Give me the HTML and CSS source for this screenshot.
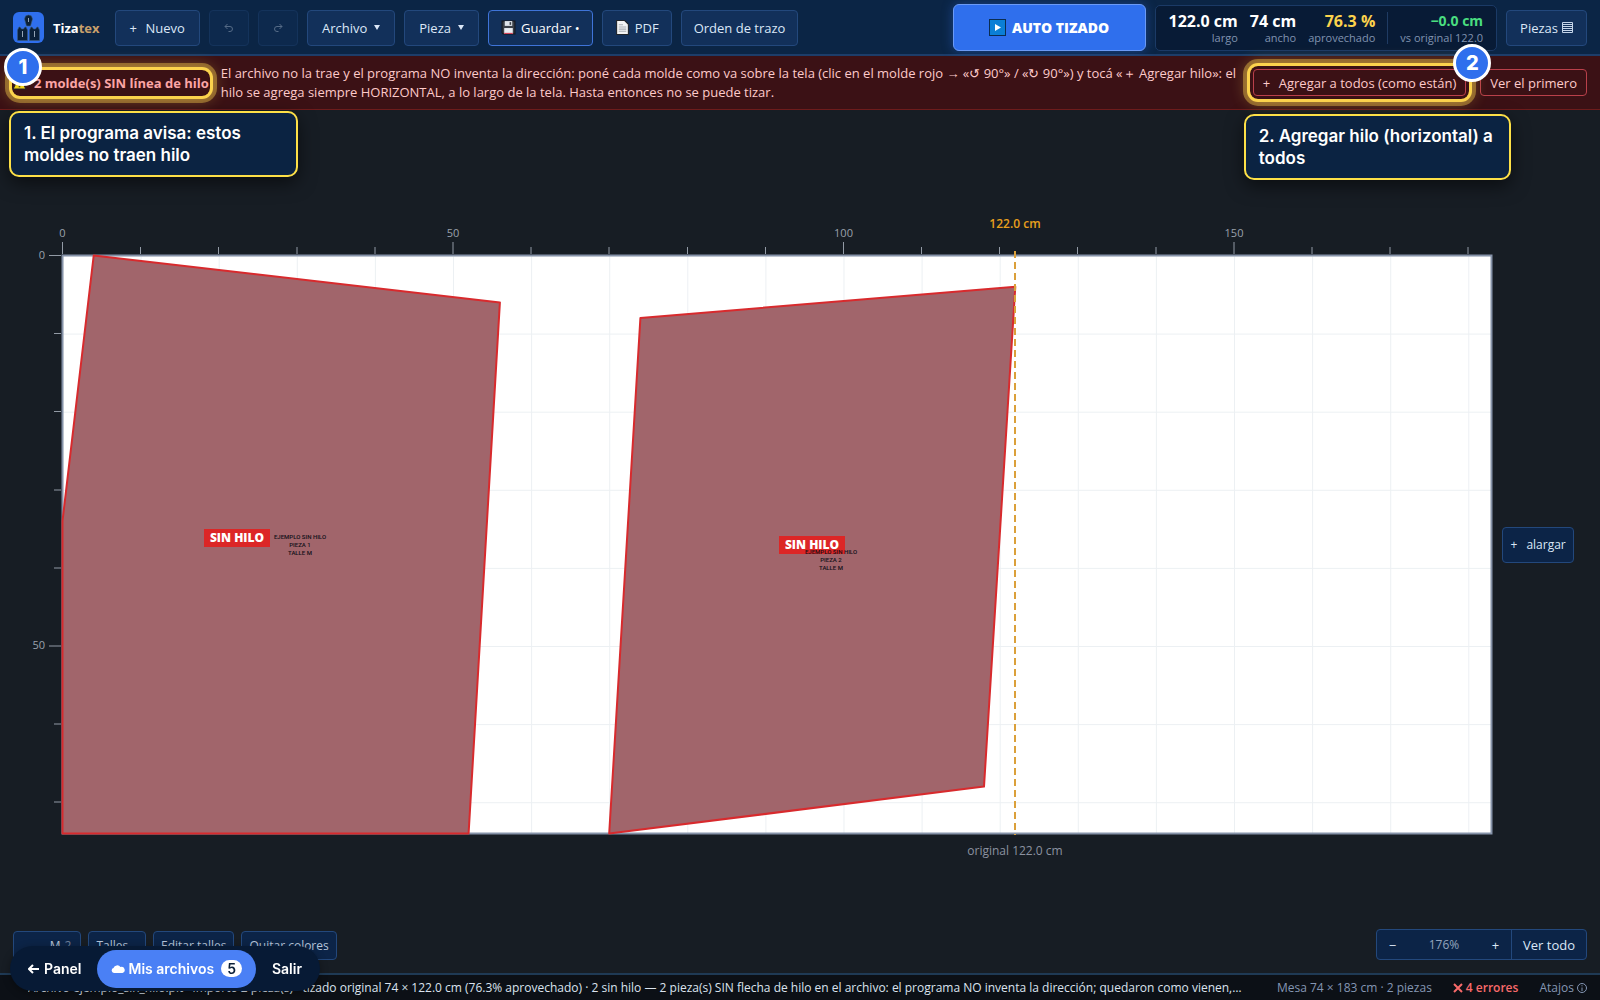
FILE: index.html
```html
<!DOCTYPE html>
<html lang="es">
<head>
<meta charset="utf-8">
<meta name="viewport" content="width=device-width, initial-scale=1">
<title>Tizatex</title>
<link rel="stylesheet" href="styles.css">
</head>
<body>
<header class="topbar">
  <a class="brand" href="#">
    <svg class="logo" viewBox="0 0 31 31" aria-hidden="true">
      <rect width="31" height="31" rx="6" fill="#2f6fed"/>
      <g fill="#0b2038" stroke="#3c5d7c" stroke-width="0.6">
        <path d="M12.500 4q3-2 6 0l1 3-2 7h-4l-2-7z"/>
        <path d="M4.500 18l1.500-3h1l1.500 2h2l1.500-2h1l1.500 3v10.500h-10z"/>
        <path d="M16.500 18l1.500-3h1l1.500 2h2l1.500-2h1l1.500 3v10.500h-10z"/>
      </g>
      <path d="M15.500 6v4M9.500 19v6M21.500 19v6" stroke="#b8c6d6" stroke-width="0.8"/>
    </svg>
    <span class="brand-name">Tiza<span class="brand-accent">tex</span></span>
  </a>
  <nav class="tools" aria-label="Herramientas">
    <button class="btn" type="button"><span class="plus">+</span>Nuevo</button>
    <button class="btn btn-icon" type="button" aria-label="Deshacer" disabled>
      <svg viewBox="0 0 12 12" class="ico"><path d="M4.500 2L2 4.500 4.500 7M2 4.500h5a2.500 2.500 0 0 1 0 5H5.500"/></svg>
    </button>
    <button class="btn btn-icon" type="button" aria-label="Rehacer" disabled>
      <svg viewBox="0 0 12 12" class="ico"><path d="M7.500 2L10 4.500 7.500 7M10 4.500H5a2.500 2.500 0 0 0 0 5h1.500"/></svg>
    </button>
    <button class="btn" type="button">Archivo<span class="caret"></span></button>
    <button class="btn" type="button">Pieza<span class="caret"></span></button>
    <button class="btn btn-tight btn-save" type="button">
      <svg viewBox="0 0 14 14" class="emoji"><path d="M1 1h12v12H2l-1-1z" fill="#3a3f47" stroke="#14171c"/><path d="M3.500 1h7v4.500h-7z" fill="#dfe4ea"/><path d="M8 2h1.500v2.500H8z" fill="#3a3f47"/><path d="M3 7.500h8V13H3z" fill="#e9edf2"/><path d="M3 12h8v1H3z" fill="#d2344c"/></svg>Guardar •
    </button>
    <button class="btn btn-tight" type="button">
      <svg viewBox="0 0 14 14" class="emoji"><path d="M1.500.5H9l3.500 3.500v9.500h-11z" fill="#f4f4f4" stroke="#20242a"/><path d="M3.500 4.500h4M3.500 6.500h7M3.500 8.500h7M3.500 10.500h7" stroke="#a9adb3"/></svg>PDF
    </button>
    <button class="btn btn-tight" type="button">Orden de trazo</button>
  </nav>
  <div class="actions">
    <button class="btn-auto" type="button">
      <svg viewBox="0 0 17 17" class="play"><rect x=".5" y=".5" width="16" height="16" fill="#0b7fd6" stroke="#0a2d52"/><path d="M6 5l6 3.500L6 12z" fill="#fff"/></svg>AUTO TIZADO
    </button>
    <dl class="stats">
      <div class="stat"><dd>122.0 cm</dd><dt>largo</dt></div>
      <div class="stat"><dd>74 cm</dd><dt>ancho</dt></div>
      <div class="stat stat-gold"><dd>76.3 %</dd><dt>aprovechado</dt></div>
      <div class="stat stat-diff"><dd>−0.0 cm</dd><dt>vs original 122.0</dt></div>
    </dl>
    <button class="btn btn-pieces" type="button">Piezas
      <svg viewBox="0 0 11 11" class="rows"><path d="M.5.500h10v10H.5zM1 2.500h9M1 4.500h9M1 6.500h9M1 8.500h9"/></svg>
    </button>
  </div>
</header>

<section class="alert" aria-label="Aviso">
  <div class="mark">
    <strong class="alert-title"><svg viewBox="0 0 14 14" class="emoji"><path d="M7 1l6 12H1z" fill="#f2d21b" stroke="#22252b"/><path d="M7 5v4M7 10.500v1" stroke="#222" stroke-width="1.500"/></svg>2 molde(s) SIN línea de hilo</strong>
    <span class="badge badge-one">1</span>
    <p class="callout callout-one">1. El programa avisa: estos moldes no traen hilo</p>
  </div>
  <p class="alert-text">El archivo no la trae y el programa NO inventa la dirección: poné cada molde como va sobre la tela (clic en el molde rojo → «↺ 90°» / «↻ 90°») y tocá «＋ Agregar hilo»: el hilo se agrega siempre HORIZONTAL, a lo largo de la tela. Hasta entonces no se puede tizar.</p>
  <div class="mark mark-two">
    <button class="btn-alert" type="button"><span class="plus">+</span>Agregar a todos (como están)</button>
    <span class="badge badge-two">2</span>
    <p class="callout callout-two">2. Agregar hilo (horizontal) a todos</p>
  </div>
  <button class="btn-alert" type="button">Ver el primero</button>
</section>

<main class="workspace">
  <svg class="table" viewBox="0 0 1600 863" role="img" aria-label="Mesa de tizado">
    <defs>
      <pattern id="grid" x="62.500" y="145.500" width="78.100" height="78.100" patternUnits="userSpaceOnUse">
        <path d="M0 0H78.100M0 0V78.100" fill="none" stroke="#ecf0f3" stroke-width="2"/>
      </pattern>
    </defs>
    <rect x="62.500" y="145.500" width="1429" height="578" fill="#fff"/>
    <rect x="62.500" y="145.500" width="1429" height="578" fill="url(#grid)"/>
    <rect x="62.500" y="145.500" width="1429" height="578" fill="none" stroke="#8592a8" stroke-width="2"/>
    <path class="tick" d="M62.500 132v12M453 132v12M843.500 132v12M1234 132v12M49 145.500h12M49 536h12"/>
    <path class="tick" d="M140.500 137v7M218.500 137v7M297 137v7M375 137v7M531 137v7M609 137v7M687.500 137v7M765.500 137v7M921.500 137v7M999.500 137v7M1077.500 137v7M1156 137v7M1312 137v7M1390 137v7M1468 137v7M54 223.500h7M54 301.500h7M54 380h7M54 458h7M54 614h7M54 692h7"/>
    <g class="scale">
      <text x="62.500" y="127" text-anchor="middle">0</text>
      <text x="453" y="127" text-anchor="middle">50</text>
      <text x="843.500" y="127" text-anchor="middle">100</text>
      <text x="1234" y="127" text-anchor="middle">150</text>
      <text x="45" y="149" text-anchor="end">0</text>
      <text x="45" y="539" text-anchor="end">50</text>
    </g>
    <path class="piece" d="M93.700 145.500L499.900 192.400 468.600 723.500H62.500V411z"/>
    <path class="piece" d="M640.400 208L1015.300 176.700 984 676.600 609.200 723.500z"/>
    <path d="M1015 141V725" stroke="#dba03a" stroke-width="2" stroke-dasharray="7 4"/>
    <text class="limit" x="1015" y="118" text-anchor="middle">122.0 cm</text>
    <text class="origin" x="1015" y="745" text-anchor="middle">original 122.0 cm</text>
    <rect x="204" y="419" width="66" height="18" fill="#dc2626"/>
    <text class="tag" x="237" y="432" text-anchor="middle">SIN HILO</text>
    <rect x="779" y="426" width="66" height="18" fill="#dc2626"/>
    <text class="tag" x="812" y="439" text-anchor="middle">SIN HILO</text>
    <g class="note" text-anchor="middle">
      <text x="300" y="429">EJEMPLO SIN HILO</text><text x="300" y="437">PIEZA 1</text><text x="300" y="445">TALLE M</text>
      <text x="831" y="444">EJEMPLO SIN HILO</text><text x="831" y="452">PIEZA 2</text><text x="831" y="460">TALLE M</text>
    </g>
  </svg>
  <button class="btn btn-grow" type="button"><span class="plus">+</span>alargar</button>
  <div class="sizes">
    <button class="btn btn-small btn-size" type="button">M <span class="dim">2</span></button>
    <button class="btn btn-small btn-sizes" type="button">Talles…</button>
    <button class="btn btn-small" type="button">Editar talles</button>
    <button class="btn btn-small" type="button">Quitar colores</button>
  </div>
  <div class="zoom">
    <button type="button" aria-label="Alejar">−</button>
    <output>176%</output>
    <button type="button" aria-label="Acercar">+</button>
    <button class="fit" type="button">Ver todo</button>
  </div>
</main>

<footer class="status">
  <p class="status-text">Archivo ejemplo_sin_hilo.plt · importó 2 pieza(s) · tizado original 74 × 122.0 cm (76.3% aprovechado) · 2 sin hilo — 2 pieza(s) SIN flecha de hilo en el archivo: el programa NO inventa la dirección; quedaron como vienen,…</p>
  <span>Mesa 74 × 183 cm · 2 piezas</span>
  <span class="errors"><svg viewBox="0 0 10 10" class="cross"><path d="M1 1l8 8M9 1L1 9"/></svg>4 errores</span>
  <a class="keys" href="#">Atajos <svg viewBox="0 0 10 10" class="info"><circle cx="5" cy="5" r="4.500"/><path d="M5 4.500V8M5 2.300v1"/></svg></a>
</footer>

<nav class="dock" aria-label="Cuenta">
  <a href="#"><svg viewBox="0 0 12 12" class="back"><path d="M11 6H1.500M5 2L1 6l4 4"/></svg>Panel</a>
  <a class="dock-main" href="#"><svg viewBox="0 0 14 8" class="cloud"><path d="M3 8a2.500 2.500 0 0 1-.5-4.900A4 4 0 0 1 9.500 2a3 3 0 0 1 2 6z"/></svg>Mis archivos<span class="count">5</span></a>
  <a href="#">Salir</a>
</nav>
</body>
</html>
```
FILE: styles.css
```css
* { box-sizing: border-box; }
body {
  margin: 0;
  min-height: 100vh;
  display: flex;
  flex-direction: column;
  background: #171d24;
  color: #dbe7f7;
  font: 13px/20px "Open Sans", "Noto Sans", sans-serif;
}
button { font: inherit; color: inherit; cursor: pointer; }
p, dl, dd, dt { margin: 0; }
a { color: inherit; text-decoration: none; }

.topbar {
  display: flex;
  align-items: center;
  gap: 15px;
  height: 56px;
  padding: 1px 13px 0;
  background: #0b2545;
  border-bottom: 2px solid #1d3d69;
}
.brand { display: flex; align-items: center; gap: 9px; }
.logo { width: 31px; height: 31px; }
.brand-name { font-weight: 700; color: #fff; }
.brand-accent { color: #c9a06b; }
.tools { display: flex; gap: 9px; }
.btn {
  display: inline-flex;
  align-items: center;
  justify-content: center;
  height: 36px;
  padding: 0 14px;
  background: #12305a;
  border: 1px solid #23487c;
  border-radius: 4px;
  white-space: nowrap;
}
.btn-tight { padding: 0 12px; }
.plus { width: 16px; text-align: left; }
.btn-icon { width: 40px; padding: 0; opacity: .4; }
.ico { width: 12px; height: 12px; fill: none; stroke: #c5d5ea; stroke-width: 1; }
.caret { margin-left: 7px; border: 3px solid transparent; border-top: 5px solid #dbe7f7; border-bottom: 0; }
.emoji { width: 15px; height: 15px; margin-right: 5px; flex: none; }
.btn-save { border-color: #3f74d8; color: #fff; }

.actions { display: flex; align-items: center; gap: 9px; margin-left: auto; }
.btn-auto {
  display: flex;
  align-items: center;
  justify-content: center;
  gap: 6px;
  width: 193px;
  height: 47px;
  background: #2f6fed;
  border: 1px solid #6b9af5;
  border-radius: 6px;
  color: #fff;
  font-weight: 800;
  font-size: 14px;
  box-shadow: 0 0 12px #2f6fed66;
}
.play { width: 17px; height: 17px; }
.stats {
  display: flex;
  gap: 12px;
  height: 46px;
  padding: 6px 13px;
  background: #081b36;
  border: 1px solid #1b3a66;
  border-radius: 5px;
  text-align: right;
  white-space: nowrap;
}
.stat { display: flex; flex-direction: column; }
.stat dd { font-size: 16px; line-height: 18px; font-weight: 700; color: #fff; }
.stat dt { font-size: 11px; line-height: 16px; color: #8093b0; }
.stat-gold dd { color: #fcd34d; }
.stat-diff { padding-left: 12px; border-left: 1px solid #1f3b63; }
.stat-diff dd { font-size: 14px; color: #4ade80; }
.btn-pieces { gap: 4px; padding: 0 13px; }
.rows { width: 11px; height: 11px; fill: none; stroke: #c5d5ea; }

.alert {
  display: flex;
  align-items: center;
  gap: 11px;
  min-height: 54px;
  padding: 6px 13px 6px 12px;
  background: #3b1115;
  border-bottom: 1px solid #6e1c1c;
  color: #fecaca;
}
.mark { position: relative; flex: none; border-radius: 8px; box-shadow: 0 0 0 3px #fcd34d, 0 0 0 7px #fcd34d66, 0 0 16px 4px #fcd34d55; }
.mark-two { padding: 3px; }
.alert-title { display: flex; align-items: center; gap: 2px; height: 26px; padding-right: 1px; color: #fca5a5; white-space: nowrap; }
.alert-text { flex: 1; margin-right: -8px; line-height: 19px; }
.btn-alert {
  display: inline-flex;
  align-items: center;
  height: 27px;
  padding: 0 9px;
  background: transparent;
  border: 1px solid #b9404a;
  border-radius: 4px;
  white-space: nowrap;
}
.badge {
  position: absolute;
  z-index: 3;
  display: grid;
  place-items: center;
  width: 38px;
  height: 38px;
  background: #2f6fed;
  border: 3px solid #fff;
  border-radius: 50%;
  color: #fff;
  font: 800 20px/24px Inter, sans-serif;
}
.badge-one { left: -8px; top: -22px; }
.badge-two { right: -22px; top: -22px; }
.callout {
  position: absolute;
  z-index: 2;
  padding: 9px 13px;
  background: #0b2342;
  border: 2px solid #fde047;
  border-radius: 10px;
  color: #fff;
  font: 600 17px/22px Inter, sans-serif;
  box-shadow: 0 6px 18px #0008;
}
.callout-one { left: -3px; top: 41px; width: 289px; }
.callout-two { left: -6px; top: 48px; width: 267px; }

.workspace { position: relative; flex: 1; }
.table { display: block; width: 100%; height: auto; }
.tick { stroke: #929aa5; stroke-width: 1; fill: none; }
.scale { fill: #9aa1ab; font-size: 11px; }
.piece { fill: #a1656b; stroke: #d82a2d; stroke-width: 2; stroke-linejoin: round; }
.limit { fill: #e9a01d; font-size: 12px; font-weight: 600; }
.origin { fill: #8b92a0; font-size: 12px; }
.tag { fill: #fff; font-size: 12px; font-weight: 800; }
.note { fill: #111018; font: 500 6px Roboto, sans-serif; }
.btn-grow { position: absolute; left: 93.900%; top: 48.300%; padding: 0 7px; background: #0c2447; font-size: 12px; }
.sizes { position: absolute; left: 13px; bottom: 13px; display: flex; gap: 7px; }
.btn-small { height: 29px; padding: 0 7px; background: #0c2447; color: #b6c5da; font-size: 12px; }
.btn-size { width: 68px; padding-left: 34px; gap: 4px; }
.btn-sizes { width: 58px; }
.dim { color: #6d7f99; }
.zoom {
  position: absolute;
  right: 13px;
  bottom: 13px;
  display: flex;
  align-items: center;
  height: 31px;
  background: #0c2447;
  border: 1px solid #23487c;
  border-radius: 4px;
}
.zoom button { width: 31px; height: 29px; padding: 0; background: none; border: 0; }
.zoom output { width: 72px; text-align: center; font-size: 12px; color: #93a4bd; }
.zoom .fit { width: 75px; border-left: 1px solid #23487c; }

.status {
  display: flex;
  align-items: center;
  gap: 21px;
  height: 27px;
  padding: 0 13px 0 28px;
  background: #0c1016;
  border-top: 2px solid #1f3a55;
  font-size: 12px;
  color: #8496b3;
  white-space: nowrap;
}
.status-text { flex: 1; overflow: hidden; text-overflow: ellipsis; color: #dbe3ee; }
.status-text, .status span, .keys { line-height: 20px; }
.errors { color: #f86a6a; font-weight: 600; }
.cross { width: 10px; height: 10px; margin-right: 3px; fill: none; stroke: #f86a6a; stroke-width: 2; vertical-align: -1px; }
.info { width: 10px; height: 10px; fill: none; stroke: #8496b3; vertical-align: -1px; }

.dock {
  position: fixed;
  z-index: 4;
  left: 10px;
  bottom: 9px;
  display: flex;
  align-items: center;
  height: 45px;
  padding: 0 2px;
  background: #071a35;
  border-radius: 23px;
  color: #fff;
  font: 600 14px/20px Inter, sans-serif;
  box-shadow: 0 2px 8px #0005;
}
.dock a { display: flex; align-items: center; height: 38px; padding: 0 16px; border-radius: 19px; }
.dock .dock-main { padding: 0 14px; background: #4a80f5; }
.back { width: 12px; height: 12px; margin-right: 4px; fill: none; stroke: #fff; stroke-width: 2; }
.cloud { width: 14px; height: 8px; margin-right: 3px; fill: #fff; }
.count { margin-left: 7px; padding: 0 6px; background: #fff; border-radius: 9px; color: #0b2038; line-height: 17px; }
```
